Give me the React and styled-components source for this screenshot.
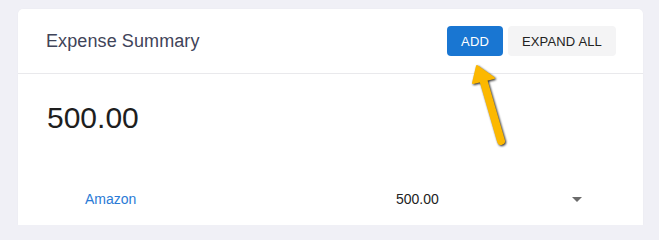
import React from "react";
import styled, { createGlobalStyle } from "styled-components";

const Global = createGlobalStyle`
  html, body { margin: 0; padding: 0; background: #f0f0f6; overflow: hidden; }
  body { font-family: "Liberation Sans", Arial, sans-serif; }
`;

const Page = styled.div`
  position: relative;
  width: 659px;
  height: 225px;
  box-sizing: border-box;
  padding: 9px 16px 0 18px;
  overflow: hidden;
`;

const Card = styled.div`
  background: #fff;
  border-radius: 5px 5px 0 0;
  height: 216px;
  box-shadow: 0 0 2px rgba(0, 0, 0, 0.03);
`;

const Header = styled.div`
  height: 65px;
  box-sizing: border-box;
  display: flex;
  align-items: center;
  justify-content: space-between;
  padding: 0 27px 0 28px;
  border-bottom: 1px solid #e9e9ec;
`;

const Title = styled.div`
  font-size: 18px;
  color: #3f4459;
  margin-top: 1px;
  letter-spacing: 0.1px;
`;

const Actions = styled.div`
  display: flex;
  gap: 5px;
`;

const Button = styled.button`
  height: 30px;
  padding: 0 14px;
  border: none;
  border-radius: 4px;
  font-family: "Liberation Sans", Arial, sans-serif;
  font-size: 13px;
  letter-spacing: 0.15px;
  text-transform: uppercase;
  cursor: pointer;
  background: ${(p) => (p.$primary ? "#1976d2" : "#f4f4f5")};
  color: ${(p) => (p.$primary ? "#fff" : "#222")};
`;

const Body = styled.div`
  padding: 27px 27px 0 28px;
`;

const Total = styled.div`
  font-size: 30px;
  line-height: 34px;
  color: #1e1e1e;
  margin-left: 1px;
`;

const Row = styled.div`
  margin-top: 40px;
  height: 48px;
  display: grid;
  grid-template-columns: 311px 1fr 24px;
  align-items: center;
  padding: 0 27px 0 39px;
  font-size: 14px;
`;

const Name = styled.a`
  color: #2a7bd6;
  text-decoration: none;
`;

const Value = styled.span`
  color: #222;
`;

const Caret = styled.svg`
  width: 24px;
  height: 24px;
  fill: #6b6b6b;
`;

const Arrow = styled.svg`
  position: absolute;
  left: 460px;
  top: 55px;
  width: 60px;
  height: 100px;
  overflow: visible;
  filter: drop-shadow(1.5px 1.5px 1.2px rgba(0, 0, 0, 0.85));
`;

export default function App() {
  return (
    <>
      <Global />
      <Page>
        <Card>
          <Header>
            <Title>Expense Summary</Title>
            <Actions>
              <Button $primary>Add</Button>
              <Button>Expand all</Button>
            </Actions>
          </Header>
          <Body>
            <Total>500.00</Total>
            <Row>
              <Name href="#">Amazon</Name>
              <Value>500.00</Value>
              <Caret viewBox="0 0 24 24">
                <path d="M7 10l5 5 5-5z" />
              </Caret>
            </Row>
          </Body>
        </Card>
        <Arrow viewBox="460 55 60 100">
          <g fill="#fcb800" stroke="#fcb800" strokeLinejoin="round">
            <line x1="483" y1="79" x2="501" y2="141" strokeWidth="8" strokeLinecap="round" />
            <polygon points="477,66 473,83 494,78" strokeWidth="2" />
          </g>
        </Arrow>
      </Page>
    </>
  );
}
